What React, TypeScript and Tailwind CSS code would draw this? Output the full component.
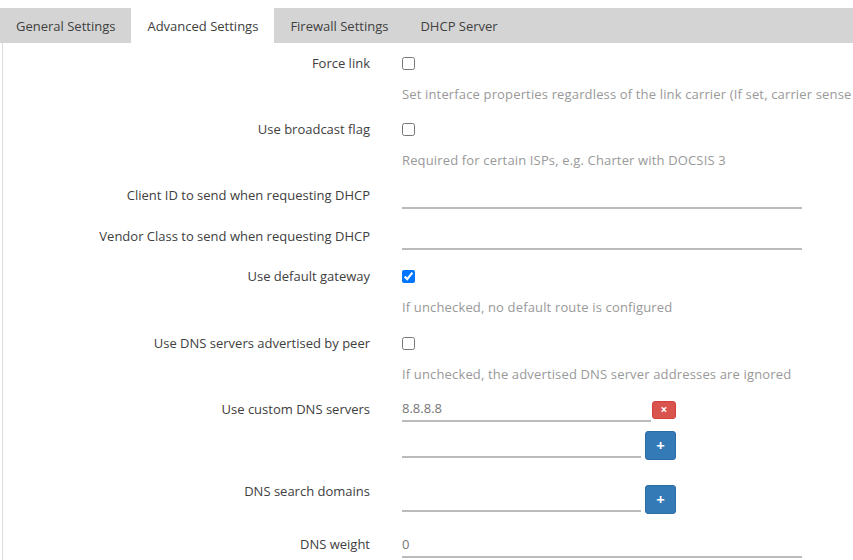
import type { ReactNode } from "react";

const tabs = ["General Settings", "Advanced Settings", "Firewall Settings", "DHCP Server"];

function Row({ label, h, children }: { label: string; h: string; children?: ReactNode }) {
  return (
    <div className={`flex ${h}`}>
      <div className="w-[367px] shrink-0 text-right leading-[20px] text-[#404040]">{label}</div>
      <div className="ml-[32px] min-w-0 flex-1">{children}</div>
    </div>
  );
}

function Check({ checked, desc }: { checked?: boolean; desc: string }) {
  return (
    <div>
      <div className="flex h-[20px] items-center">
        <input type="checkbox" defaultChecked={checked} className="m-0 h-[13px] w-[13px]" />
      </div>
      <div className="mt-[11px] overflow-hidden whitespace-nowrap leading-[20px] tracking-[0.15px] text-[#999]">{desc}</div>
    </div>
  );
}

function TextInput({ w, value }: { w: string; value?: string }) {
  return (
    <div className={`${w} h-[24px] border-b-2 border-[#bbb] leading-[20px] text-[#777]`}>
      {value}
    </div>
  );
}

function AddBtn() {
  return (
    <button
      type="button"
      className="ml-[4px] flex h-[29px] w-[31px] items-center justify-center rounded-[3px] border border-[#2e6da4] bg-[#337ab7] text-[15px] font-bold leading-none text-white"
    >
      +
    </button>
  );
}

export default function App() {
  return (
    <div className="h-[560px] w-[853px] overflow-hidden bg-white text-[13px]" style={{ fontFamily: '"Open Sans", sans-serif' }}>
      <div className="mt-[8px] flex h-[35px] bg-[#d4d4d4]">
        {tabs.map((t, i) => (
          <div
            key={t}
            className={`flex items-center px-[16px] pt-[2px] text-[#404040] ${i === 1 ? "bg-white" : ""}`}
          >
            {t}
          </div>
        ))}
      </div>

      <div className="ml-[2px] h-full border-l border-[#ddd] pt-[10px]">
        <Row label="Force link" h="h-[66px]">
          <Check desc="Set interface properties regardless of the link carrier (If set, carrier sense events do not invoke hotplug handlers)." />
        </Row>
        <Row label="Use broadcast flag" h="h-[66px]">
          <Check desc="Required for certain ISPs, e.g. Charter with DOCSIS 3" />
        </Row>
        <Row label="Client ID to send when requesting DHCP" h="h-[41px]">
          <TextInput w="w-[400px]" />
        </Row>
        <Row label="Vendor Class to send when requesting DHCP" h="h-[40px]">
          <TextInput w="w-[400px]" />
        </Row>
        <Row label="Use default gateway" h="h-[67px]">
          <Check checked desc="If unchecked, no default route is configured" />
        </Row>
        <Row label="Use DNS servers advertised by peer" h="h-[66px]">
          <Check desc="If unchecked, the advertised DNS server addresses are ignored" />
        </Row>
        <Row label="Use custom DNS servers" h="h-[82px]">
          <div className="-mt-[1px] flex items-center">
            <TextInput w="w-[249px]" value="8.8.8.8" />
            <button
              type="button"
              className="ml-[1px] flex h-[18px] w-[24px] items-center justify-center rounded-[3px] border border-[#d43f3a] bg-[#d9534f] text-[12px] font-bold leading-none text-white"
            >
              ×
            </button>
          </div>
          <div className="mt-[9px] flex items-end">
            <div className="mb-[2px]">
              <TextInput w="w-[239px]" />
            </div>
            <AddBtn />
          </div>
        </Row>
        <Row label="DNS search domains" h="h-[53px]">
          <div className="mt-[4px] flex items-end">
            <div className="mb-[2px]">
              <TextInput w="w-[239px]" />
            </div>
            <AddBtn />
          </div>
        </Row>
        <Row label="DNS weight" h="h-[30px]">
          <TextInput w="w-[400px]" value="0" />
        </Row>
      </div>
    </div>
  );
}
